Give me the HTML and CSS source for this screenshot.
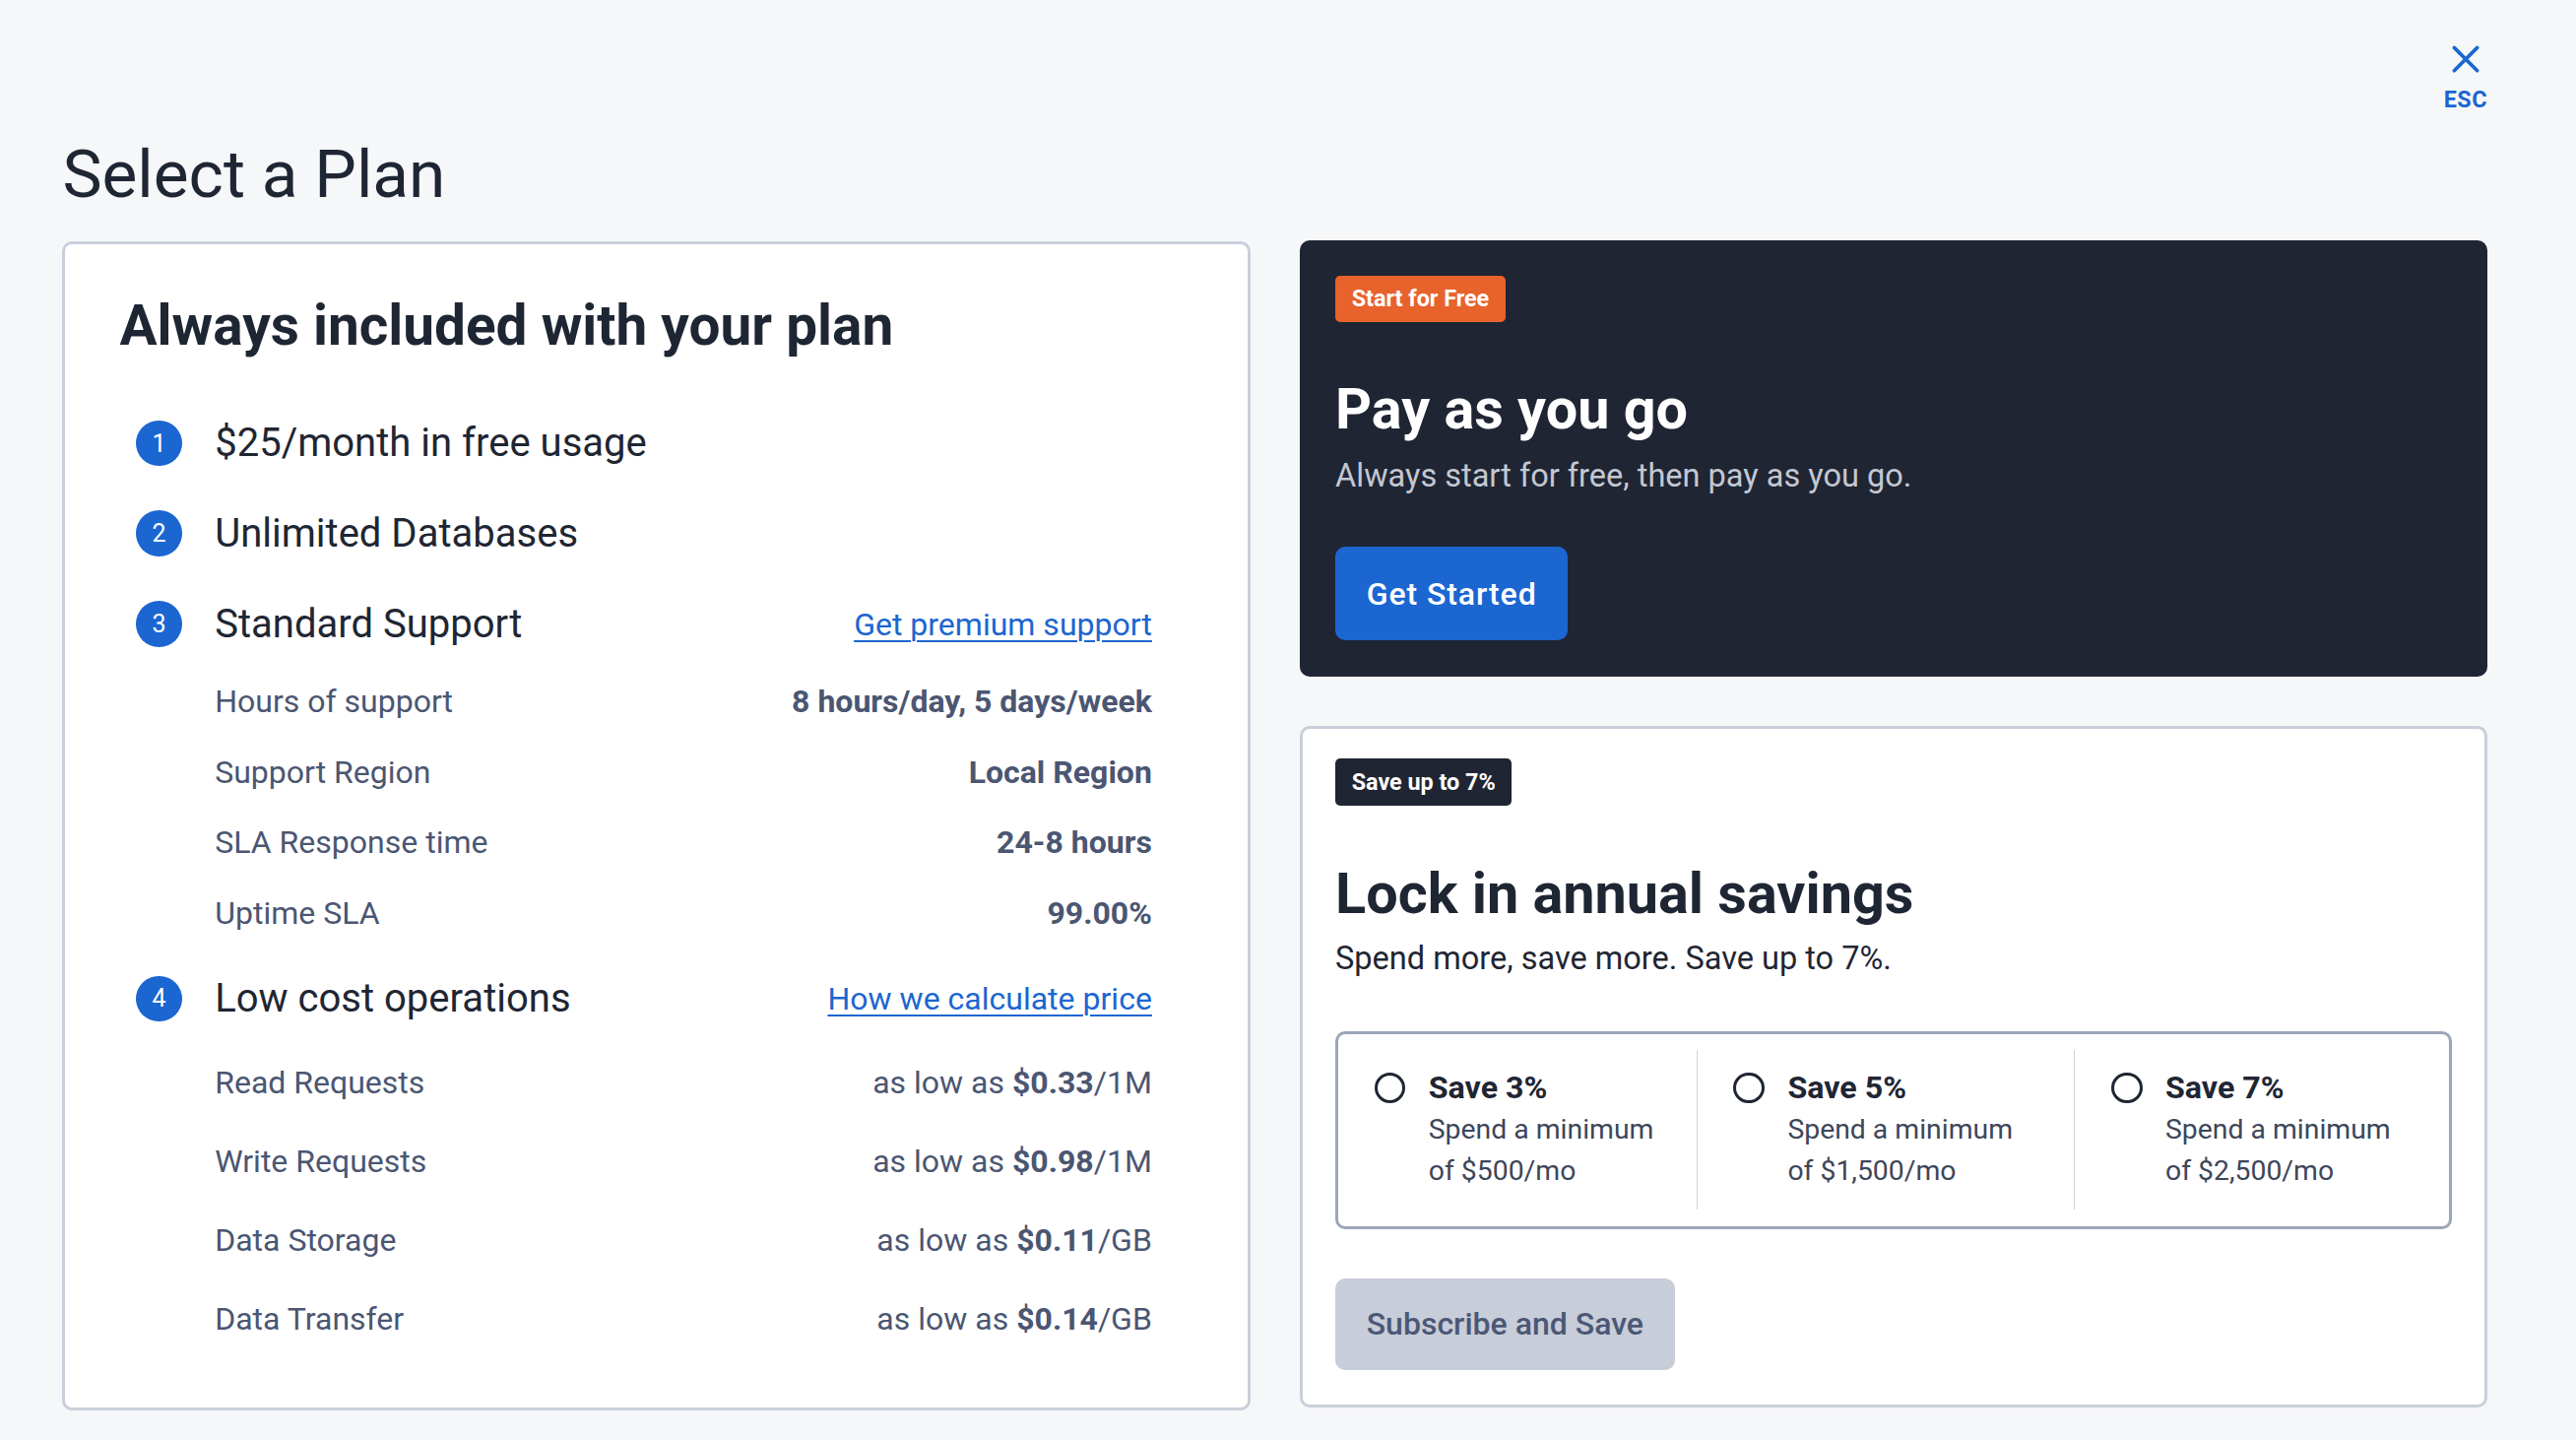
FILE: index.html
```html
<!DOCTYPE html>
<html lang="en">
<head>
<meta charset="utf-8">
<title>Select a Plan</title>
<link rel="stylesheet" href="styles.css">
</head>
<body>
<div class="page">
  <header class="topbar">
    <button class="esc" type="button">
      <svg class="esc-icon" viewBox="0 0 18 18" width="18" height="18" aria-hidden="true"><path d="M2 2L16 16M16 2L2 16"/></svg>
      <span>ESC</span>
    </button>
  </header>
  <h1 class="title">Select a Plan</h1>
  <main class="plans">
    <section class="card included">
      <h2 class="included-title">Always included with your plan</h2>
      <ol class="features">
        <li class="feature">
          <div class="feature-head"><span class="num">1</span><span class="feature-title">$25/month in free usage</span></div>
        </li>
        <li class="feature">
          <div class="feature-head"><span class="num">2</span><span class="feature-title">Unlimited Databases</span></div>
        </li>
        <li class="feature">
          <div class="feature-head"><span class="num">3</span><span class="feature-title">Standard Support</span><a class="link" href="#">Get premium support</a></div>
          <div class="details support">
            <div class="row"><span>Hours of support</span><span class="val">8 hours/day, 5 days/week</span></div>
            <div class="row"><span>Support Region</span><span class="val">Local Region</span></div>
            <div class="row"><span>SLA Response time</span><span class="val">24-8 hours</span></div>
            <div class="row"><span>Uptime SLA</span><span class="val">99.00%</span></div>
          </div>
        </li>
        <li class="feature">
          <div class="feature-head"><span class="num">4</span><span class="feature-title">Low cost operations</span><a class="link" href="#">How we calculate price</a></div>
          <div class="details prices">
            <div class="row"><span>Read Requests</span><span>as low as <b>$0.33</b>/1M</span></div>
            <div class="row"><span>Write Requests</span><span>as low as <b>$0.98</b>/1M</span></div>
            <div class="row"><span>Data Storage</span><span>as low as <b>$0.11</b>/GB</span></div>
            <div class="row"><span>Data Transfer</span><span>as low as <b>$0.14</b>/GB</span></div>
          </div>
        </li>
      </ol>
    </section>
    <div class="side">
      <section class="card dark">
        <span class="badge badge-orange">Start for Free</span>
        <h3 class="plan-title">Pay as you go</h3>
        <p class="plan-sub">Always start for free, then pay as you go.</p>
        <button class="btn btn-primary" type="button">Get Started</button>
      </section>
      <section class="card annual">
        <span class="badge badge-dark">Save up to 7%</span>
        <h3 class="plan-title">Lock in annual savings</h3>
        <p class="plan-sub">Spend more, save more. Save up to 7%.</p>
        <div class="options">
          <label class="option">
            <span class="radio"></span>
            <span class="opt-text"><span class="opt-title">Save 3%</span><span class="opt-desc">Spend a minimum</span><span class="opt-desc">of $500/mo</span></span>
          </label>
          <label class="option">
            <span class="radio"></span>
            <span class="opt-text"><span class="opt-title">Save 5%</span><span class="opt-desc">Spend a minimum</span><span class="opt-desc">of $1,500/mo</span></span>
          </label>
          <label class="option">
            <span class="radio"></span>
            <span class="opt-text"><span class="opt-title">Save 7%</span><span class="opt-desc">Spend a minimum</span><span class="opt-desc">of $2,500/mo</span></span>
          </label>
        </div>
        <button class="btn btn-disabled" type="button">Subscribe and Save</button>
      </section>
    </div>
  </main>
</div>
</body>
</html>
```
FILE: styles.css
```css
html {
  zoom: 1.6684;
}

body {
  margin: 0;
  background: #f6f7f9;
  font-family: Roboto, "Liberation Sans", sans-serif;
  color: #1f2633;
}

.page {
  padding: 27px 54px 0 38px;
}

.topbar {
  display: flex;
  justify-content: flex-end;
}

.esc {
  display: flex;
  flex-direction: column;
  align-items: center;
  gap: 8px;
  padding: 0;
  border: 0;
  background: none;
  color: #1b66d1;
  font-family: Roboto, "Liberation Sans", sans-serif;
  font-weight: 700;
  font-size: 14px;
  line-height: 16px;
  letter-spacing: 0.3px;
  cursor: pointer;
}

.esc-icon {
  display: block;
  fill: none;
  stroke: #1b66d1;
  stroke-width: 2.2;
  stroke-linecap: round;
}

.title {
  margin: 13px 0 16px;
  font-weight: 400;
  font-size: 40.5px;
  line-height: 48px;
  color: #1f2633;
}

.plans {
  display: grid;
  grid-template-columns: 1fr 1fr;
  gap: 30px;
  align-items: start;
}

.card {
  background: #fff;
  border: 2px solid #c9cfda;
  border-radius: 6px;
}

.included {
  margin-top: 1px;
  padding: 30px 33px 39px 33px;
}

.included-title {
  margin: 0;
  font-weight: 700;
  font-size: 34px;
  line-height: 40px;
  color: #1f2633;
}

.features {
  list-style: none;
  margin: 31px 25px 0 10px;
  padding: 0;
  display: flex;
  flex-direction: column;
  gap: 15px;
}

.feature-head {
  display: flex;
  align-items: center;
  gap: 20px;
  height: 40px;
}

.num {
  flex: none;
  width: 28px;
  height: 28px;
  border-radius: 50%;
  background: #1b66d1;
  color: #fff;
  display: flex;
  align-items: center;
  justify-content: center;
  font-size: 15px;
  font-weight: 400;
}

.feature-title {
  flex: 1;
  font-size: 24px;
  line-height: 32px;
  color: #1f2633;
}

.link {
  color: #1b66d1;
  font-size: 19.2px;
  text-decoration: underline;
  text-underline-offset: 3px;
  text-decoration-thickness: 1px;
}

.details {
  padding-left: 48px;
  display: flex;
  flex-direction: column;
}

.support {
  margin: 12px 0 2px;
  gap: 13px;
}

.prices {
  margin-top: 16px;
  gap: 18px;
}

.row {
  display: flex;
  justify-content: space-between;
  align-items: center;
  height: 30px;
  font-size: 19.2px;
  color: #4b5672;
}

.val,
.row b {
  font-weight: 700;
}

.side {
  display: flex;
  flex-direction: column;
  gap: 30px;
}

.dark {
  background: #1f2533;
  border-color: #1f2533;
  padding: 20px 20px 20px;
  color: #fff;
}

.annual {
  padding: 18px 20px 21px;
}

.badge {
  display: inline-block;
  padding: 0 10px;
  border-radius: 3px;
  font-weight: 700;
  font-size: 14px;
  color: #fff;
}

.badge-orange {
  background: #e8622c;
  height: 28px;
  line-height: 28px;
}

.badge-dark {
  background: #1f2533;
  height: 29px;
  line-height: 29px;
}

.plan-title {
  margin: 34px 0 0;
  font-weight: 700;
  font-size: 34.5px;
  line-height: 40px;
}

.dark .plan-title {
  color: #fff;
}

.annual .plan-title {
  color: #1f2633;
}

.plan-sub {
  margin: 6px 0 0;
  font-size: 19.5px;
  line-height: 28px;
}

.dark .plan-sub {
  color: #c3c8d2;
}

.annual .plan-sub {
  margin-top: 5px;
  color: #1f2633;
}

.btn {
  display: block;
  border: 0;
  border-radius: 6px;
  padding: 0 19px;
  font-family: Roboto, "Liberation Sans", sans-serif;
  font-weight: 500;
  font-size: 19.2px;
  cursor: pointer;
}

.btn-primary {
  margin-top: 29px;
  height: 57px;
  background: #1b66d1;
  color: #fff;
  letter-spacing: 0.55px;
}

.btn-disabled {
  margin-top: 30px;
  height: 56px;
  background: #c7cdd9;
  color: #4b5875;
}

.options {
  margin-top: 30px;
  border: 2px solid #9ba6b8;
  border-radius: 6px;
  padding: 10px 0;
  display: grid;
  grid-template-columns: 218fr 230fr 228fr;
}

.option {
  display: flex;
  align-items: flex-start;
  gap: 14px;
  padding: 10px 10px 11px 22px;
}

.option + .option {
  border-left: 1px solid #cfd4dd;
}

.radio {
  flex: none;
  width: 19px;
  height: 19px;
  box-sizing: border-box;
  border: 2px solid #1f2633;
  border-radius: 50%;
  margin-top: 3.5px;
}

.opt-text {
  display: flex;
  flex-direction: column;
}

.opt-title {
  font-weight: 700;
  font-size: 19.3px;
  line-height: 26px;
  color: #1f2633;
}

.opt-desc {
  font-size: 17px;
  line-height: 25px;
  color: #3d465a;
}
```
